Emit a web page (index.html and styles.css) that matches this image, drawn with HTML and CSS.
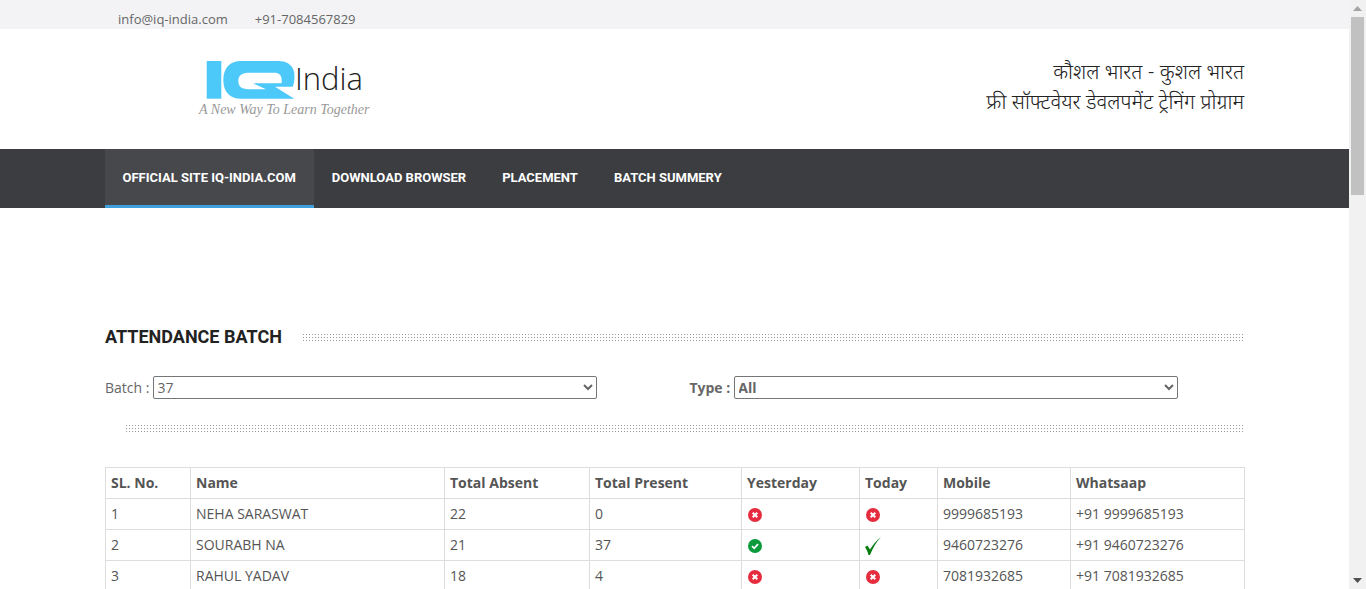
FILE: index.html
```html
<!DOCTYPE html>
<html lang="en">
<head>
    <meta charset="UTF-8">
    <meta name="viewport" content="width=device-width, initial-scale=1.0">
    <title>Attendance Batch</title>
    <link rel="stylesheet" href="styles.css">
</head>
<body>
    <div class="pagina">
        <!-- Barra contatti -->
        <div class="topbar">
            <span>info@iq-india.com</span>
            <span>+91-7084567829</span>
        </div>
        <!-- Testata -->
        <header class="testata">
            <div class="logo">
                <div class="logo-riga">
                    <svg class="logo-iq" width="91" height="38" viewBox="0 0 91 38">
                        <path fill="#4dc9f9" d="M0.700 0H15.300V37.700H0.700Z"/>
                        <path fill="#4dc9f9" fill-rule="evenodd" d="M35 0H72C83 0 88.500 6 88.500 15C88.500 19 88 23 86.700 25.700H69L88.300 37.700H35C24 37.700 17.300 31 17.300 19C17.300 7 24 0 35 0ZM44 11.700C36 11.700 32.300 14 32.300 20C32.300 26 36 28.300 44 28.300H60L47.300 22.300H75.700V19C75.700 14 73 11.700 68 11.700Z"/>
                    </svg>
                    <span class="logo-nome">India</span>
                </div>
                <div class="logo-motto">A New Way To Learn Together</div>
            </div>
            <div class="slogan">
                <div>कौशल भारत - कुशल भारत</div>
                <div>फ्री सॉफ्टवेयर डेवलपमेंट ट्रेनिंग प्रोग्राम</div>
            </div>
        </header>
        <!-- Menu -->
        <nav class="menu">
            <a class="attivo" href="#">Official Site IQ-India.com</a>
            <a href="#">Download Browser</a>
            <a href="#">Placement</a>
            <a href="#">Batch Summery</a>
        </nav>
        <main class="contenuto">
            <div class="titolo">
                <h2>ATTENDANCE BATCH</h2>
                <div class="puntini"></div>
            </div>
            <div class="filtri">
                <label class="filtro">Batch :
                    <select><option>37</option></select>
                </label>
                <label class="filtro filtro-tipo">Type :
                    <select><option>All</option></select>
                </label>
            </div>
            <div class="puntini separatore"></div>
            <table>
                <thead>
                    <tr>
                        <th class="c-sl">SL. No.</th>
                        <th class="c-nome">Name</th>
                        <th class="c-assenti">Total Absent</th>
                        <th class="c-presenti">Total Present</th>
                        <th class="c-ieri">Yesterday</th>
                        <th class="c-oggi">Today</th>
                        <th class="c-mobile">Mobile</th>
                        <th>Whatsaap</th>
                    </tr>
                </thead>
                <tbody>
                    <tr>
                        <td>1</td><td>NEHA SARASWAT</td><td>22</td><td>0</td>
                        <td><svg class="stato" viewBox="0 0 14 14"><circle cx="7" cy="7" r="7" fill="#e52d3f"/><path d="M4.700 4.700L9.300 9.300M9.300 4.700L4.700 9.300" stroke="#fff" stroke-width="2"/></svg></td>
                        <td><svg class="stato" viewBox="0 0 14 14"><circle cx="7" cy="7" r="7" fill="#e52d3f"/><path d="M4.700 4.700L9.300 9.300M9.300 4.700L4.700 9.300" stroke="#fff" stroke-width="2"/></svg></td>
                        <td>9999685193</td><td>+91 9999685193</td>
                    </tr>
                    <tr>
                        <td>2</td><td>SOURABH NA</td><td>21</td><td>37</td>
                        <td><svg class="stato" viewBox="0 0 14 14"><circle cx="7" cy="7" r="7" fill="#0b9a3c"/><path d="M4 7.200L6.200 9.300L10 5.200" fill="none" stroke="#fff" stroke-width="1.800"/></svg></td>
                        <td><svg class="spunta" width="16" height="18" viewBox="0 0 16 18"><path fill="#0a7d12" d="M0 10L2.500 8.500L5 12.500C8 7.500 11.500 3.500 16 0C11.500 5 8 10.500 5 18H3.500C2.800 15 1.500 12.500 0 10Z"/></svg></td>
                        <td>9460723276</td><td>+91 9460723276</td>
                    </tr>
                    <tr>
                        <td>3</td><td>RAHUL YADAV</td><td>18</td><td>4</td>
                        <td><svg class="stato" viewBox="0 0 14 14"><circle cx="7" cy="7" r="7" fill="#e52d3f"/><path d="M4.700 4.700L9.300 9.300M9.300 4.700L4.700 9.300" stroke="#fff" stroke-width="2"/></svg></td>
                        <td><svg class="stato" viewBox="0 0 14 14"><circle cx="7" cy="7" r="7" fill="#e52d3f"/><path d="M4.700 4.700L9.300 9.300M9.300 4.700L4.700 9.300" stroke="#fff" stroke-width="2"/></svg></td>
                        <td>7081932685</td><td>+91 7081932685</td>
                    </tr>
                </tbody>
            </table>
        </main>
    </div>
    <!-- Barra di scorrimento -->
    <div class="scrollbar">
        <div class="freccia"><svg width="9" height="5" viewBox="0 0 9 5"><path fill="#a3a3a3" d="M4.500 0L9 5H0Z"/></svg></div>
        <div class="cursore"></div>
        <div class="freccia freccia-giu"><svg width="9" height="5" viewBox="0 0 9 5"><path fill="#505050" d="M0 0H9L4.500 5Z"/></svg></div>
    </div>
</body>
</html>
```

FILE: styles.css
```css
/* Stile globale */
html, body {
    height: 100%;
    margin: 0;
    overflow: hidden;
}
body {
    display: flex;
    font-family: "Open Sans", sans-serif;
    font-size: 14px;
    color: #555;
    background-color: white;
}
.pagina {
    flex: 1;
    min-width: 0;
    height: 100%;
    overflow: hidden;
}
.topbar {
    height: 29px;
    background-color: #f3f3f5;
    padding: 0 0 0 118px;
    display: flex;
    gap: 27px;
    font-size: 13px;
    line-height: 38px;
    color: #666;
    overflow: hidden;
}
.testata {
    height: 120px;
    padding: 0 105px;
    display: flex;
    justify-content: space-between;
}
.logo {
    margin: 32px 0 0 94px;
}
.logo-riga {
    display: flex;
    align-items: flex-start;
    margin-left: 7px;
}
.logo-nome {
    font-family: "Open Sans", sans-serif;
    font-weight: 300;
    font-size: 31px;
    line-height: 34px;
    color: #222;
    margin-left: -2px;
}
.logo-iq {
    display: block;
}
.logo-motto {
    font-family: "Liberation Serif", serif;
    font-style: italic;
    font-size: 14px;
    line-height: 16px;
    color: #999;
    margin: 3px 0 0 0;
    white-space: nowrap;
}
.slogan {
    font-family: "Noto Sans Devanagari", "Noto Sans", sans-serif;
    font-size: 20.5px;
    font-weight: 300;
    line-height: 30px;
    color: #222;
    text-align: right;
    padding-top: 30px;
}
.menu {
    height: 59px;
    background-color: #3c3d41;
    padding: 0 105px;
    display: flex;
}
.menu a {
    font-family: Roboto, sans-serif;
    font-weight: 700;
    font-size: 13px;
    line-height: 57px;
    text-transform: uppercase;
    text-decoration: none;
    color: white;
    padding: 0 18.5px 0 17.5px;
}
.menu a.attivo {
    background-color: #47484c;
    border-bottom: 3px solid #3d9fdc;
    height: 56px;
}
.contenuto {
    padding: 114px 105px 0;
}
.titolo {
    display: flex;
    align-items: center;
    height: 28px;
}
.titolo h2 {
    font-family: Roboto, sans-serif;
    font-size: 18px;
    font-weight: 700;
    color: #222;
    margin: 0 21px 0 0;
}
.titolo .puntini {
    margin-top: 5px;
}
.puntini {
    flex: 1;
    height: 9px;
    background-image: radial-gradient(circle at 0.5px 0.5px, #999 0.7px, transparent 0.71px);
    background-size: 3px 3px;
}
.filtri {
    display: flex;
    margin-top: 25px;
    height: 24px;
}
.filtro {
    display: flex;
    align-items: center;
    gap: 4px;
    white-space: nowrap;
    color: #666;
}
.filtro-tipo {
    margin-left: 92px;
    font-weight: 700;
}
.filtro select {
    width: 444px;
    height: 23px;
    font-family: "Open Sans", sans-serif;
    font-size: 14px;
    color: #666;
    background-color: white;
    border: 1px solid #767676;
    border-radius: 2px;
    padding: 0 0 4px;
    text-indent: -1px;
}
.filtro-tipo select {
    font-weight: 700;
}
.separatore {
    flex: none;
    margin: 26px 0 0 21px;
}
table {
    width: 1140px;
    border-collapse: collapse;
    table-layout: fixed;
    margin-top: 33px;
}
th, td {
    border: 1px solid #ddd;
    height: 31px;
    padding: 0 5px 2px;
    text-align: left;
    font-size: 14px;
    box-sizing: border-box;
}
th {
    font-weight: 700;
}
.c-sl { width: 85px; }
.c-nome { width: 254px; }
.c-assenti { width: 145px; }
.c-presenti { width: 152px; }
.c-ieri { width: 118px; }
.c-oggi { width: 78px; }
.c-mobile { width: 133px; }
.stato {
    display: block;
    width: 14px;
    height: 14px;
    margin: 3px 0 0 1px;
}
.spunta {
    display: block;
    margin: 3px 0 0 0;
}
.scrollbar {
    flex: none;
    width: 17px;
    height: 100%;
    background-color: #f1f1f1;
    display: flex;
    flex-direction: column;
}
.freccia {
    height: 17px;
    display: flex;
    align-items: center;
    justify-content: center;
}
.cursore {
    height: 178px;
    margin: 0 2px;
    background-color: #c1c1c1;
}
.freccia-giu {
    margin-top: auto;
}
```
